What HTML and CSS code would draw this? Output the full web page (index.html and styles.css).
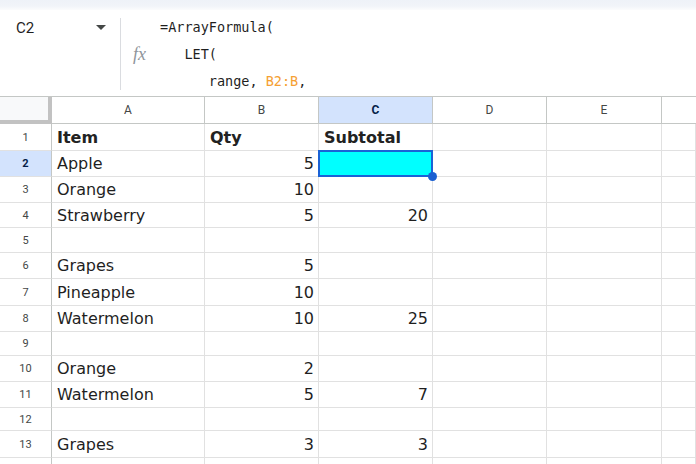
FILE: index.html
```html
<!DOCTYPE html>
<html>
<head>
<meta charset="utf-8">
<link rel="stylesheet" href="styles.css">
</head>
<body>
<div class="top"></div>
<div class="fbar">
  <div class="namebox"><span class="ref">C2</span><span class="caret"></span></div>
  <div class="divider"></div>
  <div class="fx">fx</div>
  <pre class="formula">=ArrayFormula(
   LET(
      range, <span class="rng">B2:B</span>,</pre>
</div>
<div class="sheet">
  <div class="row head">
    <div class="corner"></div>
    <div class="ch">A</div><div class="ch">B</div><div class="ch sel">C</div><div class="ch">D</div><div class="ch">E</div><div class="ch last"></div>
  </div>
  <div class="row r27">
    <div class="rh">1</div><div class="c b">Item</div><div class="c b">Qty</div><div class="c b">Subtotal</div><div class="c"></div><div class="c"></div><div class="c"></div>
  </div>
  <div class="row r26">
    <div class="rh sel">2</div><div class="c">Apple</div><div class="c n">5</div><div class="c active"><span class="handle"></span></div><div class="c"></div><div class="c"></div><div class="c"></div>
  </div>
  <div class="row r26">
    <div class="rh">3</div><div class="c">Orange</div><div class="c n">10</div><div class="c"></div><div class="c"></div><div class="c"></div><div class="c"></div>
  </div>
  <div class="row r25">
    <div class="rh">4</div><div class="c">Strawberry</div><div class="c n">5</div><div class="c n">20</div><div class="c"></div><div class="c"></div><div class="c"></div>
  </div>
  <div class="row r25">
    <div class="rh">5</div><div class="c"></div><div class="c"></div><div class="c"></div><div class="c"></div><div class="c"></div><div class="c"></div>
  </div>
  <div class="row r26">
    <div class="rh">6</div><div class="c">Grapes</div><div class="c n">5</div><div class="c"></div><div class="c"></div><div class="c"></div><div class="c"></div>
  </div>
  <div class="row r27">
    <div class="rh">7</div><div class="c">Pineapple</div><div class="c n">10</div><div class="c"></div><div class="c"></div><div class="c"></div><div class="c"></div>
  </div>
  <div class="row r26">
    <div class="rh">8</div><div class="c">Watermelon</div><div class="c n">10</div><div class="c n">25</div><div class="c"></div><div class="c"></div><div class="c"></div>
  </div>
  <div class="row r24">
    <div class="rh">9</div><div class="c"></div><div class="c"></div><div class="c"></div><div class="c"></div><div class="c"></div><div class="c"></div>
  </div>
  <div class="row r26">
    <div class="rh">10</div><div class="c">Orange</div><div class="c n">2</div><div class="c"></div><div class="c"></div><div class="c"></div><div class="c"></div>
  </div>
  <div class="row r26">
    <div class="rh">11</div><div class="c">Watermelon</div><div class="c n">5</div><div class="c n">7</div><div class="c"></div><div class="c"></div><div class="c"></div>
  </div>
  <div class="row r23">
    <div class="rh">12</div><div class="c"></div><div class="c"></div><div class="c"></div><div class="c"></div><div class="c"></div><div class="c"></div>
  </div>
  <div class="row r27">
    <div class="rh">13</div><div class="c">Grapes</div><div class="c n">3</div><div class="c n">3</div><div class="c"></div><div class="c"></div><div class="c"></div>
  </div>
  <div class="row r26">
    <div class="rh"></div><div class="c"></div><div class="c"></div><div class="c"></div><div class="c"></div><div class="c"></div><div class="c"></div>
  </div>
</div>
</body>
</html>
```
FILE: styles.css
```css
* { box-sizing: border-box; }
html, body { margin: 0; padding: 0; background: #fff; overflow: hidden; }
body { width: 696px; height: 464px; font-family: Roboto, "Liberation Sans", sans-serif; }

.top {
  height: 10px;
  background: linear-gradient(#eef2f8 0, #f1f4f9 60%, #fbfcfd 100%);
}

.fbar {
  height: 86px;
  display: flex;
  align-items: flex-start;
  padding-top: 4px;
}
.namebox {
  width: 120px;
  height: 27px;
  display: flex;
  align-items: center;
  padding-left: 16px;
  padding-right: 14px;
}
.ref { font-size: 15px; color: #1f1f1f; }
.caret {
  margin-left: auto;
  width: 0; height: 0;
  border-left: 5px solid transparent;
  border-right: 5px solid transparent;
  border-top: 5px solid #444746;
}
.divider {
  width: 1px;
  height: 72px;
  margin-top: 4px;
  background: #dadce0;
}
.fx {
  width: 39px;
  margin-top: 27px;
  line-height: 27px;
  padding-left: 12px;
  font-family: "Liberation Serif", serif;
  font-style: italic;
  font-size: 18px;
  color: #8f959b;
}
.formula {
  margin: 0;
  font-family: "DejaVu Sans Mono", "Liberation Mono", monospace;
  font-size: 13.5px;
  line-height: 27px;
  color: #1f1f1f;
}
.rng { color: #f5a033; }

.sheet { border-top: 1px solid #c4c7c5; }
.row {
  display: grid;
  grid-template-columns: 52px 153px 114px 114px 114px 115px 1fr;
}
.head { height: 27px; }
.r23 { height: 23px; }
.r24 { height: 24px; }
.r25 { height: 25px; }
.r26 { height: 26px; }
.r27 { height: 27px; }

.corner {
  background: #f8f9fa;
  border-right: 4px solid #c2c2c2;
  border-bottom: 4px solid #c2c2c2;
}
.ch {
  display: flex;
  align-items: center;
  justify-content: center;
  font-size: 12px;
  color: #444746;
  border-right: 1px solid #c4c7c5;
  border-bottom: 1px solid #c4c7c5;
}
.ch.sel { background: #d3e3fd; color: #041e49; font-weight: bold; }
.ch.last { border-right: none; }

.rh {
  display: flex;
  align-items: center;
  justify-content: center;
  font-size: 11px;
  color: #444746;
  border-right: 1px solid #c4c7c5;
  border-bottom: 1px solid #e1e1e1;
}
.rh.sel { background: #d3e3fd; color: #041e49; font-weight: bold; }

.c {
  display: flex;
  align-items: center;
  padding: 0 4px 0 5px;
  font-family: "DejaVu Sans", Verdana, sans-serif;
  font-size: 16px;
  color: #1f1f1f;
  white-space: nowrap;
  border-right: 1px solid #e1e1e1;
  border-bottom: 1px solid #e1e1e1;
}
.c.b { font-weight: bold; color: #222; }
.c.n { justify-content: flex-end; }

.c.active {
  position: relative;
  background: #00ffff;
}
.c.active::after {
  content: "";
  position: absolute;
  left: -1px; top: -1px; right: -1px; bottom: -1px;
  border: 2px solid #1a62d6;
}
.handle {
  position: absolute;
  right: -5px;
  bottom: -5px;
  width: 9px;
  height: 9px;
  border-radius: 50%;
  background: #1a5fd1;
  z-index: 2;
}
```
